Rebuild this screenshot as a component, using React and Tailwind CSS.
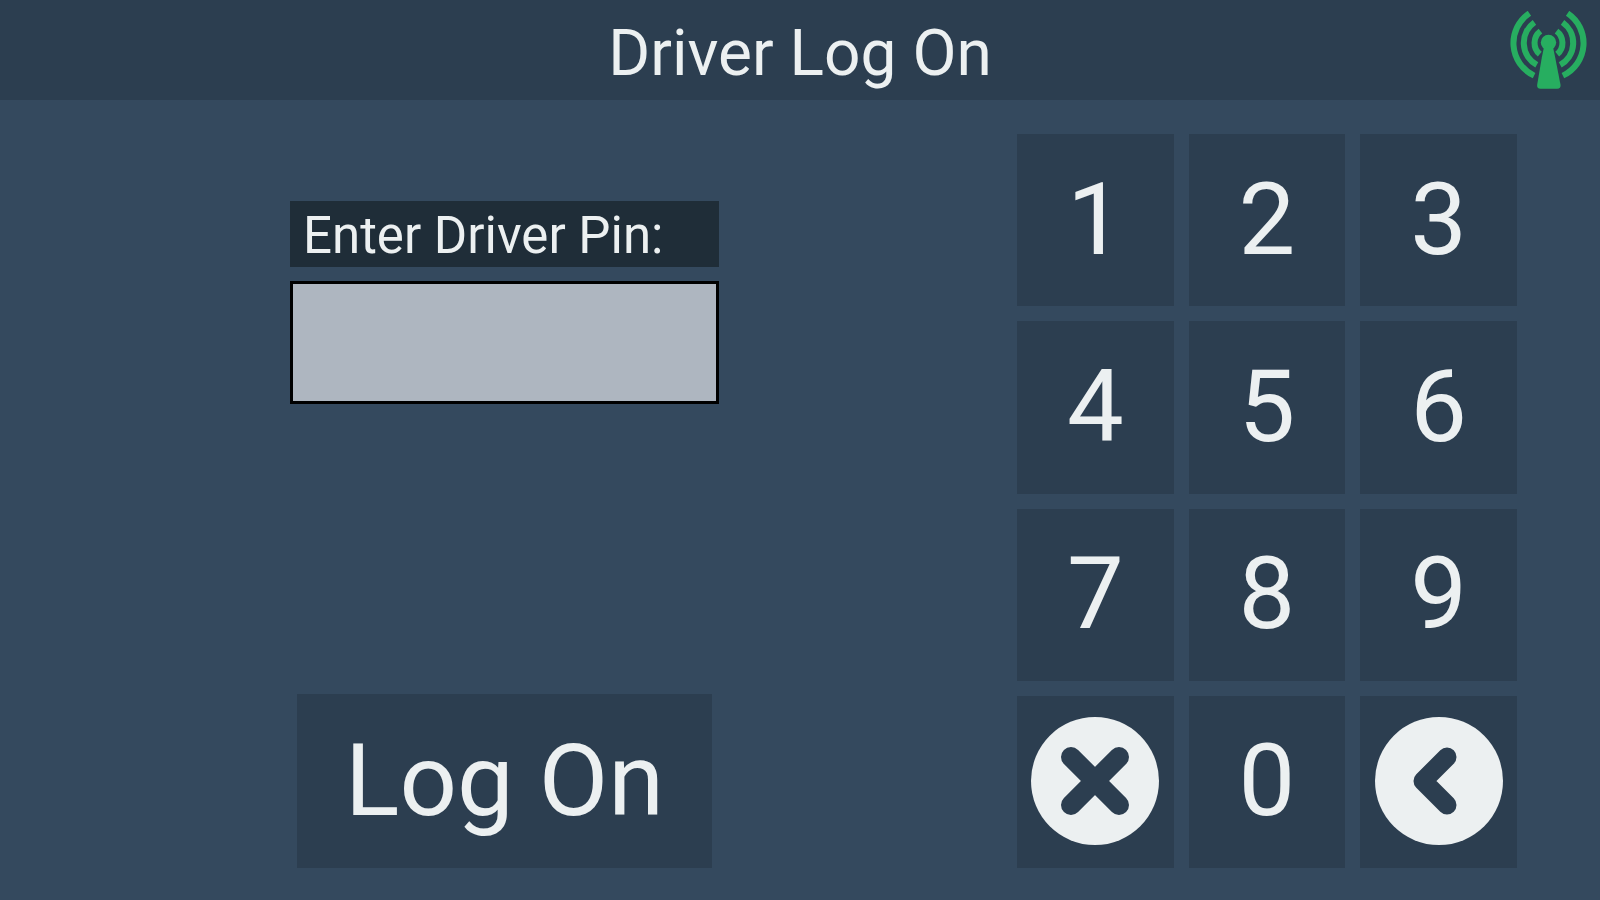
import React, { useState } from 'react';

const KEYS = ['1', '2', '3', '4', '5', '6', '7', '8', '9', 'clear', '0', 'back'];

const AntennaIcon = () => (
  <svg viewBox="90 31 236 236" className="size-[79px]" role="img" aria-label="Signal connected">
    <g fill="none" stroke="#27ae60" strokeWidth="18">
      {/* left waves */}
      <path d="M151 38A107 107 0 0 0 165 224" />
      <path d="M166 65A75 75 0 0 0 173 192" />
      <path d="M184 91A44 44 0 0 0 182 160" />
      {/* right waves */}
      <path d="M265 38A107 107 0 0 1 251 224" />
      <path d="M250 65A75 75 0 0 1 243 192" />
      <path d="M232 91A44 44 0 0 1 234 160" />
    </g>
    <circle cx="208" cy="125" r="23" fill="#27ae60" />
    <path
      d="M195 138H221Q224 150 228 170L244 252Q245 263 234 263H184Q173 263 174 252L188 170Q192 150 195 138Z"
      fill="#27ae60"
    />
  </svg>
);

const ClearIcon = () => (
  <svg viewBox="0 0 130 130" className="size-[130px]" aria-hidden="true">
    <circle cx="65" cy="65" r="64" fill="#ecf0f1" />
    <path d="M41 41L89 89M89 41L41 89" stroke="#2c3e50" strokeWidth="20" strokeLinecap="round" />
  </svg>
);

const BackIcon = () => (
  <svg viewBox="0 0 130 130" className="size-[130px]" aria-hidden="true">
    <circle cx="65" cy="65" r="64" fill="#ecf0f1" />
    <path
      d="M73 41L49 65L73 89"
      fill="none"
      stroke="#2c3e50"
      strokeWidth="19"
      strokeLinecap="round"
      strokeLinejoin="round"
    />
  </svg>
);

const keyContent = (key) => {
  if (key === 'clear') return <ClearIcon />;
  if (key === 'back') return <BackIcon />;
  return key;
};

const Keypad = ({ onKey }) => (
  <div className="grid w-[500px] grid-cols-3 grid-rows-4 gap-[15px]">
    {KEYS.map((key) => (
      <button
        key={key}
        type="button"
        aria-label={key}
        onClick={() => onKey(key)}
        className="flex items-center justify-center bg-[#2c3e50] pb-[2px] text-[101px] leading-none active:bg-[#1f2d3a]"
      >
        {keyContent(key)}
      </button>
    ))}
  </div>
);

const App = () => {
  const [pin, setPin] = useState('');

  const handleKey = (key) => {
    if (key === 'clear') setPin('');
    else if (key === 'back') setPin((p) => p.slice(0, -1));
    else setPin((p) => p + key);
  };

  return (
    <div className="flex min-h-screen flex-col bg-[#34495e] font-[Roboto,sans-serif] text-[#ecf0f1]">
      {/* Title bar */}
      <header className="grid h-[100px] grid-cols-[1fr_auto_1fr] items-center bg-[#2c3e50] px-3">
        <h1 className="col-start-2 pt-2 text-[64px] leading-none">Driver Log On</h1>
        <div className="justify-self-end">
          <AntennaIcon />
        </div>
      </header>

      <main className="flex flex-1 gap-2 pt-[34px] pr-[83px] pb-8">
        {/* PIN entry */}
        <form
          className="flex flex-1 flex-col items-center justify-between pt-[67px]"
          onSubmit={(e) => e.preventDefault()}
        >
          <div className="flex w-full max-w-[429px] flex-col gap-[14px]">
            <label htmlFor="pin" className="bg-[#1f2d38] px-[13px] pt-[10px] pb-[6px] text-[51px] leading-[50px]">
              Enter Driver Pin:
            </label>
            <input
              id="pin"
              type="password"
              inputMode="numeric"
              value={pin}
              onChange={(e) => setPin(e.target.value)}
              className="h-[123px] w-full border-[3px] border-black bg-[#aeb6c0] px-4 text-[64px] text-black outline-none"
            />
          </div>
          <button
            type="submit"
            className="h-[174px] w-full max-w-[415px] bg-[#2c3e50] pb-[2px] text-[101px] leading-none active:bg-[#1f2d3a]"
          >
            Log On
          </button>
        </form>

        <Keypad onKey={handleKey} />
      </main>
    </div>
  );
};

export default App;
